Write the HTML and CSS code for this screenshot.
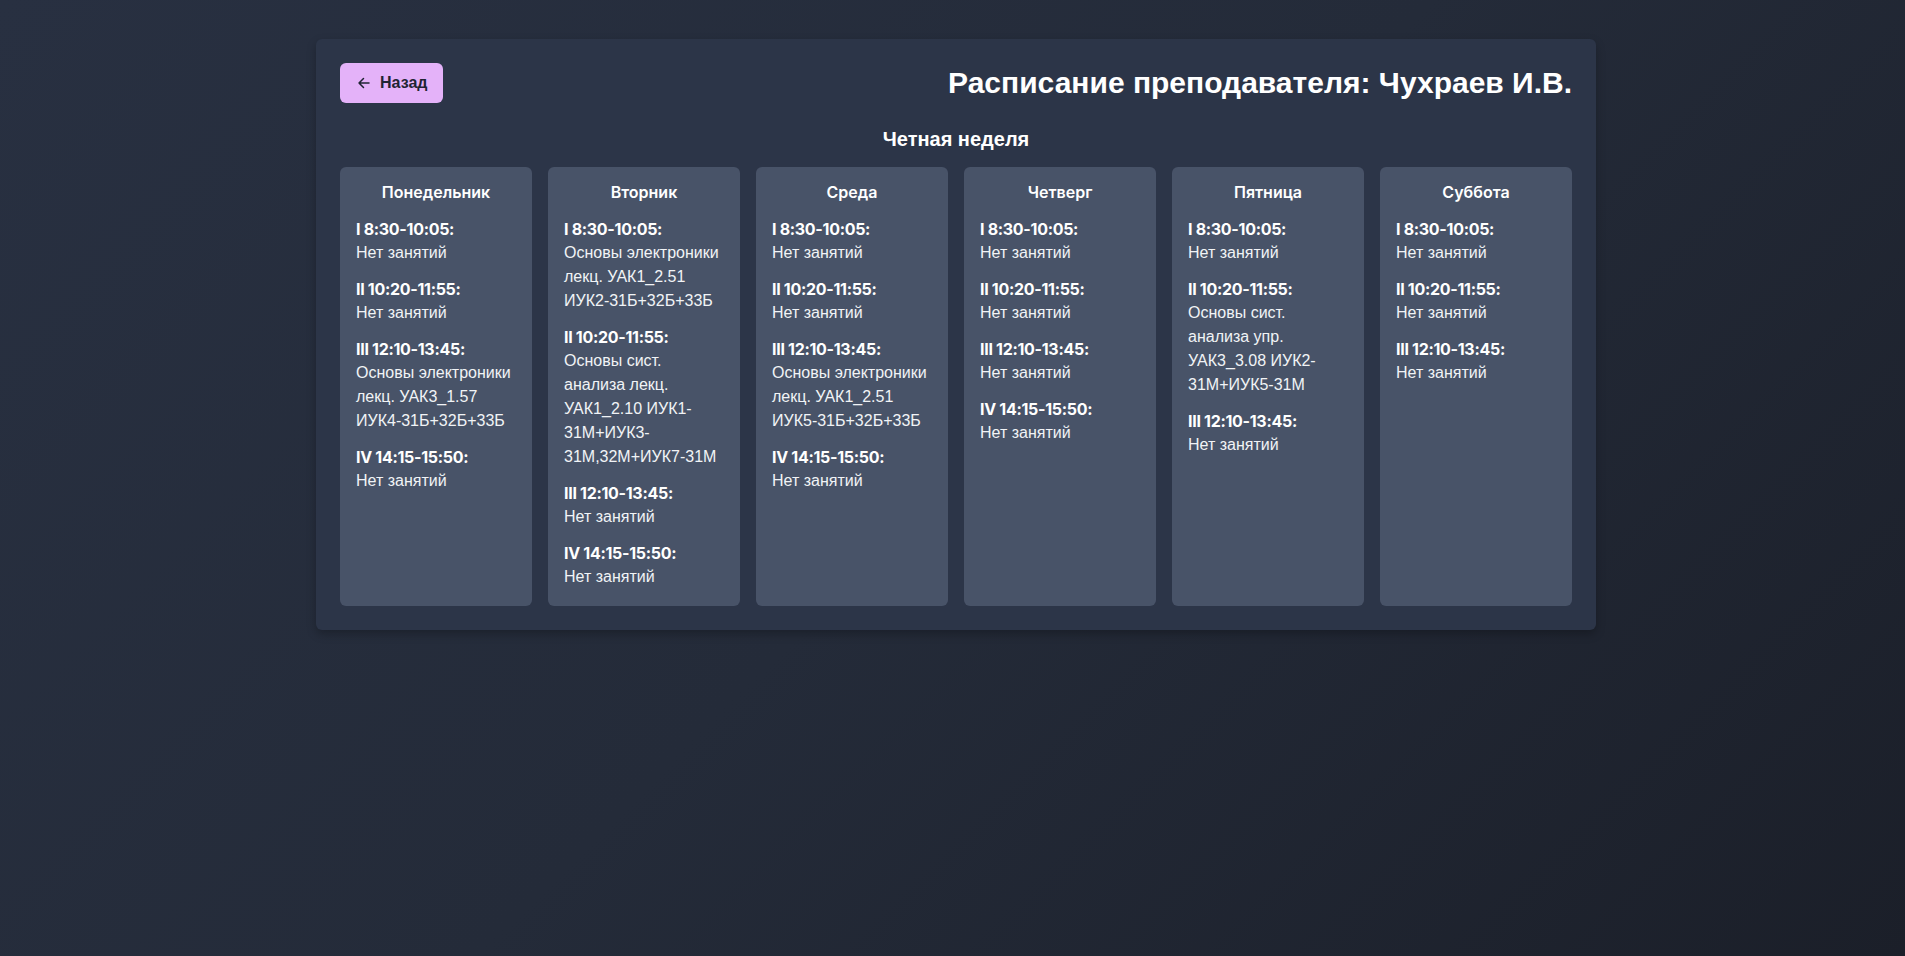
FILE: index.html
```html
<!DOCTYPE html>
<html lang="ru">
<head>
<meta charset="utf-8">
<title>Расписание преподавателя</title>
<link rel="stylesheet" href="styles.css">
</head>
<body>
<div class="page">
  <main class="panel">
    <header class="head">
      <button class="back">
        <svg class="back-icon" viewBox="0 0 16 16" width="16" height="16" aria-hidden="true">
          <path d="M13 8H3M7.5 3.5L3 8l4.5 4.5" fill="none" stroke="currentColor" stroke-width="1.5" stroke-linecap="round" stroke-linejoin="round"/>
        </svg>
        <span>Назад</span>
      </button>
      <h1 class="title">Расписание преподавателя: Чухраев И.В.</h1>
    </header>
    <h2 class="week">Четная неделя</h2>
    <section class="days">
      <div class="day">
        <h3 class="day-name">Понедельник</h3>
        <div class="slot"><div class="time">I 8:30-10:05:</div><div class="lesson">Нет занятий</div></div>
        <div class="slot"><div class="time">II 10:20-11:55:</div><div class="lesson">Нет занятий</div></div>
        <div class="slot"><div class="time">III 12:10-13:45:</div><div class="lesson">Основы электроники лекц. УАК3_1.57 ИУК4-31Б+32Б+33Б</div></div>
        <div class="slot"><div class="time">IV 14:15-15:50:</div><div class="lesson">Нет занятий</div></div>
      </div>
      <div class="day">
        <h3 class="day-name">Вторник</h3>
        <div class="slot"><div class="time">I 8:30-10:05:</div><div class="lesson">Основы электроники лекц. УАК1_2.51 ИУК2-31Б+32Б+33Б</div></div>
        <div class="slot"><div class="time">II 10:20-11:55:</div><div class="lesson">Основы сист. анализа лекц. УАК1_2.10 ИУК1-31М+ИУК3-31М,32М+ИУК7-31М</div></div>
        <div class="slot"><div class="time">III 12:10-13:45:</div><div class="lesson">Нет занятий</div></div>
        <div class="slot"><div class="time">IV 14:15-15:50:</div><div class="lesson">Нет занятий</div></div>
      </div>
      <div class="day">
        <h3 class="day-name">Среда</h3>
        <div class="slot"><div class="time">I 8:30-10:05:</div><div class="lesson">Нет занятий</div></div>
        <div class="slot"><div class="time">II 10:20-11:55:</div><div class="lesson">Нет занятий</div></div>
        <div class="slot"><div class="time">III 12:10-13:45:</div><div class="lesson">Основы электроники лекц. УАК1_2.51 ИУК5-31Б+32Б+33Б</div></div>
        <div class="slot"><div class="time">IV 14:15-15:50:</div><div class="lesson">Нет занятий</div></div>
      </div>
      <div class="day">
        <h3 class="day-name">Четверг</h3>
        <div class="slot"><div class="time">I 8:30-10:05:</div><div class="lesson">Нет занятий</div></div>
        <div class="slot"><div class="time">II 10:20-11:55:</div><div class="lesson">Нет занятий</div></div>
        <div class="slot"><div class="time">III 12:10-13:45:</div><div class="lesson">Нет занятий</div></div>
        <div class="slot"><div class="time">IV 14:15-15:50:</div><div class="lesson">Нет занятий</div></div>
      </div>
      <div class="day">
        <h3 class="day-name">Пятница</h3>
        <div class="slot"><div class="time">I 8:30-10:05:</div><div class="lesson">Нет занятий</div></div>
        <div class="slot"><div class="time">II 10:20-11:55:</div><div class="lesson">Основы сист. анализа упр. УАК3_3.08 ИУК2-31М+ИУК5-31М</div></div>
        <div class="slot"><div class="time">III 12:10-13:45:</div><div class="lesson">Нет занятий</div></div>
      </div>
      <div class="day">
        <h3 class="day-name">Суббота</h3>
        <div class="slot"><div class="time">I 8:30-10:05:</div><div class="lesson">Нет занятий</div></div>
        <div class="slot"><div class="time">II 10:20-11:55:</div><div class="lesson">Нет занятий</div></div>
        <div class="slot"><div class="time">III 12:10-13:45:</div><div class="lesson">Нет занятий</div></div>
      </div>
    </section>
  </main>
</div>
</body>
</html>
```

FILE: styles.css
```css
* { box-sizing: border-box; }
html, body { margin: 0; padding: 0; }
body {
  min-height: 956px;
  background: linear-gradient(135deg, #283041 0%, #242b39 50%, #1b1f29 100%);
  color: #f3f4f6;
  font-family: "Liberation Sans", Arial, sans-serif;
}
.page {
  padding: 39px 0 0 7px;
  display: flex;
  justify-content: center;
}
.panel {
  width: 1280px;
  background: #2c3548;
  border-radius: 6px;
  padding: 24px;
  box-shadow: 0 4px 10px rgba(0,0,0,0.25);
}
.head {
  display: flex;
  justify-content: space-between;
  align-items: center;
  height: 40px;
}
.back {
  display: flex;
  align-items: center;
  gap: 8px;
  height: 40px;
  width: 103px;
  padding: 0 16px;
  border: none;
  border-radius: 6px;
  background: #e4b2f9;
  color: #1f2433;
  font-family: "Liberation Sans", Arial, sans-serif;
  font-weight: 700;
  font-size: 16px;
  cursor: pointer;
}
.back-icon { flex: none; }
.title {
  margin: 0;
  font-size: 30px;
  font-weight: 700;
  color: #ffffff;
  line-height: 36px;
}
.week {
  margin: 24px 0 16px;
  text-align: center;
  font-size: 20px;
  line-height: 24px;
  font-weight: 700;
  color: #ffffff;
}
.days {
  display: grid;
  grid-template-columns: repeat(6, 1fr);
  gap: 16px;
  align-items: stretch;
}
.day {
  background: #485368;
  border-radius: 6px;
  padding: 13px 16px 16px;
  min-height: 439px;
}
.day-name {
  margin: 0 0 13px;
  text-align: center;
  font-family: Inter, "Noto Sans", sans-serif;
  font-size: 16px;
  line-height: 24px;
  font-weight: 600;
  color: #ffffff;
}
.slot { margin-bottom: 12px; }
.slot:last-child { margin-bottom: 0; }
.time {
  font-family: Inter, "Noto Sans", sans-serif;
  font-weight: 700;
  font-size: 16px;
  line-height: 24px;
  color: #ffffff;
  letter-spacing: -0.3px;
}
.lesson {
  font-family: "Liberation Sans", Arial, sans-serif;
  font-size: 16px;
  line-height: 24px;
  color: #f1f3f6;
}
```
